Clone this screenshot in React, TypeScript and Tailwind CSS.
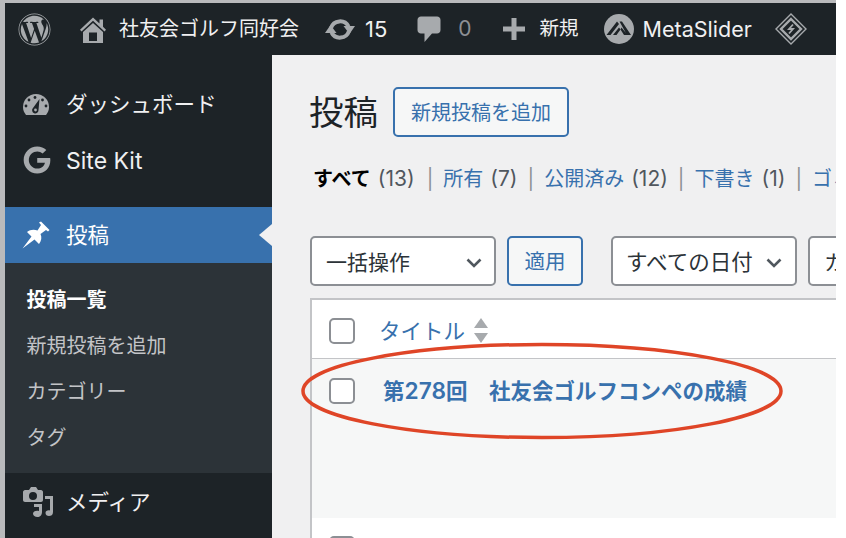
import React from 'react';
import { FaWordpress, FaGoogle } from 'react-icons/fa';

// admin bar icons
function HomeIcon() {
  return (
    <svg viewBox="0 0 26 27" className="w-[26px] h-[27px]" fill="#a7aaad">
      <path d="M13 1.500 L19.500 7.500 V3.500 H23 V10.800 L26 13.800 L24.500 15.500 L13 4.800 L1.500 15.500 L0 13.800 Z" />
      <path fillRule="evenodd" d="M13 7 L23 16 V27 H3 V16 Z M9 16.500 V25 H17 V16.500 Z" />
    </svg>
  );
}

function UpdatesIcon() {
  return (
    <svg viewBox="0 0 30 25" className="w-[30px] h-[25px]" fill="#a7aaad">
      <path d="M6 11 A9.500 9.500 0 0 1 23.500 9.500 M24 14 A9.500 9.500 0 0 1 6.500 15.500" fill="none" stroke="#a7aaad" strokeWidth="4" />
      <path d="M18.500 9 H30 L24.500 17 Z M0 16 H11.500 L5.500 8 Z" />
    </svg>
  );
}

function CommentIcon() {
  return (
    <svg viewBox="0 0 24 26" className="w-[24px] h-[26px]" fill="#a7aaad">
      <path d="M4 0.500 H20 C22 0.500 23.500 2 23.500 4 V14 C23.500 16 22 17.500 20 17.500 H15 L7.500 26 V17.500 H4 C2 17.500 0.500 16 0.500 14 V4 C0.500 2 2 0.500 4 0.500 Z" />
    </svg>
  );
}

function PlusIcon() {
  return (
    <svg viewBox="0 0 24 24" className="w-[24px] h-[24px]" fill="#a7aaad">
      <path d="M9.500 1 H14.500 V9.500 H23 V14.500 H14.500 V23 H9.500 V14.500 H1 V9.500 H9.500 Z" />
    </svg>
  );
}

function MetaSliderIcon() {
  return (
    <svg viewBox="0 0 30 30" className="w-[30px] h-[30px]">
      <circle cx="15" cy="15" r="15" fill="#a7aaad" />
      <path d="M2.500 21 L13 7.500 L15 10 L6.500 21 Z M9 21 L15 13.500 L16.500 15.500 L12.500 21 Z" fill="#1d2327" />
      <path d="M15.500 7.500 H18 L27 21 H23 Z M17.500 13.500 L23.500 21 H20 L16.500 15.500 Z" fill="#1d2327" />
    </svg>
  );
}

function DiamondIcon() {
  return (
    <svg viewBox="0 0 32 32" className="w-[32px] h-[32px]" fill="none" stroke="#a7aaad">
      <path d="M16 1 L31 16 L16 31 L1 16 Z" strokeWidth="1.400" />
      <path d="M16 6 L26 16 L16 26 L6 16 Z" strokeWidth="2.400" />
      <path d="M18 11.500 L14 16 H18 L14 20.500" strokeWidth="1.800" />
    </svg>
  );
}

// menu icons
function GaugeIcon() {
  return (
    <svg viewBox="0 0 26 21" className="w-[26px] h-[21px]">
      <path d="M3 21 C1 18.500 0 16 0 13 A13 13 0 0 1 26 13 C26 16 25 18.500 23 21 Z" fill="#a7aaad" />
      <g fill="#1d2327">
        <circle cx="12" cy="3.500" r="1.400" />
        <circle cx="6" cy="6" r="1.400" />
        <circle cx="3" cy="12" r="1.400" />
        <circle cx="23" cy="12" r="1.400" />
        <circle cx="19.500" cy="6" r="1.400" />
        <path d="M16.500 5 L15.500 16 A3.200 3.200 0 1 1 10 14 Z" />
      </g>
      <circle cx="12.500" cy="16" r="1.400" fill="#a7aaad" />
    </svg>
  );
}

function PinIcon() {
  return (
    <svg viewBox="0 0 28 28" className="w-[28px] h-[28px]" fill="#ffffff">
      <path d="M0.500 27.500 L9.500 15.500 L5 11 C8 8.500 12 8 15.500 9.500 L19 4 L17 1.500 L19 0.500 L27.500 9 L26 10.500 L24 9 L18.500 13 C20 16 19.500 20 17 23 L12.500 18.500 Z" />
    </svg>
  );
}

function MediaIcon() {
  return (
    <svg viewBox="0 0 32 32" className="w-[32px] h-[32px]" fill="#a7aaad">
      <path fillRule="evenodd" d="M9 1 H14 L16 4 H19 C20 4 21 5 21 6 V14 C21 15 20 16 19 16 H3 C2 16 1 15 1 14 V6 C1 5 2 4 3 4 H7 Z M11 6 A4 4 0 1 0 11 14 A4 4 0 1 0 11 6 Z" />
      <path d="M23 10 H31 V26 C31 29 29 30 27 30 C25 30 23.500 29 23.500 27 C23.500 25 25.500 24 28 24.500 V13 H23 Z" />
      <path d="M12 18 H20 V26 C20 29 18 31 15.500 31 C13 31 11 29.500 11 27.500 C11 25.500 14 24 17 25 V21 H12 Z" />
    </svg>
  );
}

function Chevron({ className }: { className?: string }) {
  return (
    <svg viewBox="0 0 16 10" className={className} fill="none" stroke="#50575e" strokeWidth="2.600">
      <path d="M1.500 1.500 L8 8 L14.500 1.500" />
    </svg>
  );
}

function BarItem({ icon, label, muted, className }: { icon: React.ReactNode; label: string; muted?: boolean; className: string }) {
  return (
    <div className={`flex items-center ${className}`}>
      {icon}
      <span className={muted ? 'text-[#8c8f94]' : 'text-[#f0f0f1]'}>{label}</span>
    </div>
  );
}

function SideItem({ icon, label, active, textClass = 'text-[21.500px]' }: { icon: React.ReactNode; label: string; active?: boolean; textClass?: string }) {
  return (
    <div className={`relative flex items-center h-[56px] pl-[17px] ${active ? 'bg-[#3871ad] text-white' : 'text-[#f0f0f1]'}`}>
      <span className="w-[45px] flex items-center">{icon}</span>
      <span className={`${textClass} leading-none pt-[2px] -ml-[1px]`}>{label}</span>
      {active && (
        <span className="absolute right-0 top-[17px] border-y-[11px] border-r-[13px] border-y-transparent border-r-[#f0f0f1]" />
      )}
    </div>
  );
}

const views = [
  { label: '所有', count: '(7)' },
  { label: '公開済み', count: '(12)' },
  { label: '下書き', count: '(1)' },
];

export default function App() {
  return (
    <div className="relative w-[846px] h-[538px] overflow-hidden bg-white font-['Inter','Noto_Sans_CJK_JP',sans-serif]">
      <div className="w-[836px] h-full border-l-[5px] border-t-[3px] border-[#b9babc] flex flex-col overflow-hidden">
        {/* 管理バー */}
        <header className="h-[52px] shrink-0 bg-[#1d2327] flex items-center pl-[13px] text-[20px] text-[#f0f0f1]">
          <FaWordpress className="w-[33px] h-[33px] text-[#a7aaad] mr-[29px]" />
          <BarItem icon={<HomeIcon />} label="社友会ゴルフ同好会" className="gap-[13px]" />
          <BarItem icon={<UpdatesIcon />} label="15" className="gap-[10px] ml-[26px] text-[22px]" />
          <BarItem icon={<CommentIcon />} label="0" muted className="gap-[17px] ml-[30px] text-[21px]" />
          <BarItem icon={<PlusIcon />} label="新規" className="gap-[14px] ml-[30px] text-[19.500px]" />
          <BarItem icon={<MetaSliderIcon />} label="MetaSlider" className="gap-[9px] ml-[25px] text-[21.500px]" />
          <div className="ml-[23px]">
            <DiamondIcon />
          </div>
        </header>

        <div className="flex flex-1 min-h-0">
          {/* サイドメニュー */}
          <aside className="w-[267px] shrink-0 bg-[#1d2327] pt-[21px]">
            <SideItem icon={<span className="ml-[1px] flex"><GaugeIcon /></span>} label="ダッシュボード" />
            <SideItem icon={<FaGoogle className="ml-[1px] w-[28px] h-[28px] text-[#a7aaad]" />} label="Site Kit" textClass="text-[23px]" />
            <div className="h-[19px]" />
            <SideItem icon={<PinIcon />} label="投稿" active />
            <ul className="bg-[#2c3338] pt-[14px] pb-[12px] pl-[21.500px] text-[20px] text-[#c3c4c7]">
              <li className="h-[46px] flex items-center font-semibold text-white">投稿一覧</li>
              <li className="h-[46px] flex items-center">新規投稿を追加</li>
              <li className="h-[46px] flex items-center">カテゴリー</li>
              <li className="h-[46px] flex items-center">タグ</li>
            </ul>
            <div className="mt-[1px]">
              <SideItem icon={<MediaIcon />} label="メディア" />
            </div>
          </aside>

          {/* 本文 */}
          <main className="flex-1 min-w-0 bg-[#f0f0f1] pl-[38px] pt-[32px] text-[#50575e] overflow-hidden">
            <div className="flex items-center gap-[15px] -ml-[1px]">
              <h1 className="text-[34.500px] leading-none font-normal text-[#1d2327] pt-[2px]">投稿</h1>
              <button className="h-[50px] w-[176px] pt-[2px] rounded-[5px] border-2 border-[#3871ad] bg-[#f6f7f7] text-[20px] text-[#3871ad]">
                新規投稿を追加
              </button>
            </div>

            <div className="flex items-center whitespace-nowrap mt-[29px] ml-[3px] h-[26px] text-[20px]">
              <span className="font-semibold text-black">すべて</span>
              <span className="ml-[7px] mr-[2px] text-[21px]">(13)</span>
              {views.map((v) => (
                <React.Fragment key={v.label}>
                  <span className="mx-[10px] text-[#8c8f94]">|</span>
                  <span className="text-[#3871ad]">{v.label}</span>
                  <span className="ml-[7px] text-[21px]">{v.count}</span>
                </React.Fragment>
              ))}
              <span className="mx-[10px] text-[#8c8f94]">|</span>
              <span className="text-[#3871ad]">ゴミ箱</span>
            </div>

            <div className="flex items-center gap-[11px] mt-[44px] whitespace-nowrap text-[21px]">
              <div className="w-[186px] h-[50px] pt-[3px] shrink-0 rounded-[5px] border-2 border-[#8c8f94] bg-white flex items-center justify-between pl-[14px] pr-[12px] text-[#2c3338]">
                一括操作
                <Chevron className="w-[16px] h-[10px]" />
              </div>
              <button className="w-[76px] h-[50px] pt-[3px] shrink-0 rounded-[5px] border-2 border-[#3871ad] bg-[#f6f7f7] text-[20.500px] text-[#3871ad]">
                適用
              </button>
              <div className="w-[186px] h-[50px] pt-[3px] shrink-0 ml-[17px] rounded-[5px] border-2 border-[#8c8f94] bg-white flex items-center justify-between pl-[13px] pr-[12px] text-[21.500px] text-[#2c3338]">
                すべての日付
                <Chevron className="w-[18px] h-[10px]" />
              </div>
              <div className="w-[186px] h-[50px] pt-[3px] shrink-0 rounded-[5px] border-2 border-[#8c8f94] bg-white flex items-center pl-[14px] text-[#2c3338]">
                カテゴリー
              </div>
            </div>

            <div className="mt-[12px] border-l-2 border-t-2 border-[#c3c4c7] bg-white">
              <div className="h-[59px] pt-[3px] border-b border-[#c3c4c7] flex items-center pl-[17px]">
                <span className="w-[26px] h-[26px] rounded-[5px] border-2 border-[#8c8f94] bg-white" />
                <span className="ml-[24px] pt-[2px] text-[21.500px] text-[#3871ad]">タイトル</span>
                <span className="ml-[9px] flex flex-col gap-[5px]">
                  <span className="border-x-[7px] border-b-[10px] border-x-transparent border-b-[#a7aaad]" />
                  <span className="border-x-[7px] border-t-[10px] border-x-transparent border-t-[#a7aaad]" />
                </span>
              </div>
              <div className="h-[159px] bg-[#f6f7f7] pl-[17px] pt-[19px] flex items-start">
                <span className="w-[26px] h-[26px] rounded-[5px] border-2 border-[#8c8f94] bg-white" />
                <span className="ml-[28px] text-[21.500px] leading-[26px] font-semibold text-[#3871ad] whitespace-nowrap">
                  第<span className="text-[22.700px]">278</span>回　社友会ゴルフコンペの成績
                </span>
              </div>
              <div className="h-[30px] pl-[17px] pt-[18px]">
                <span className="block w-[26px] h-[26px] rounded-[5px] border-2 border-[#8c8f94] bg-white" />
              </div>
            </div>
          </main>
        </div>
      </div>

      {/* 赤い丸の注釈 */}
      <svg viewBox="0 0 846 538" className="absolute inset-0 w-[846px] h-[538px] pointer-events-none" fill="none">
        <ellipse cx="542" cy="391" rx="239" ry="46.500" stroke="#df4527" strokeWidth="3.500" />
      </svg>
    </div>
  );
}
